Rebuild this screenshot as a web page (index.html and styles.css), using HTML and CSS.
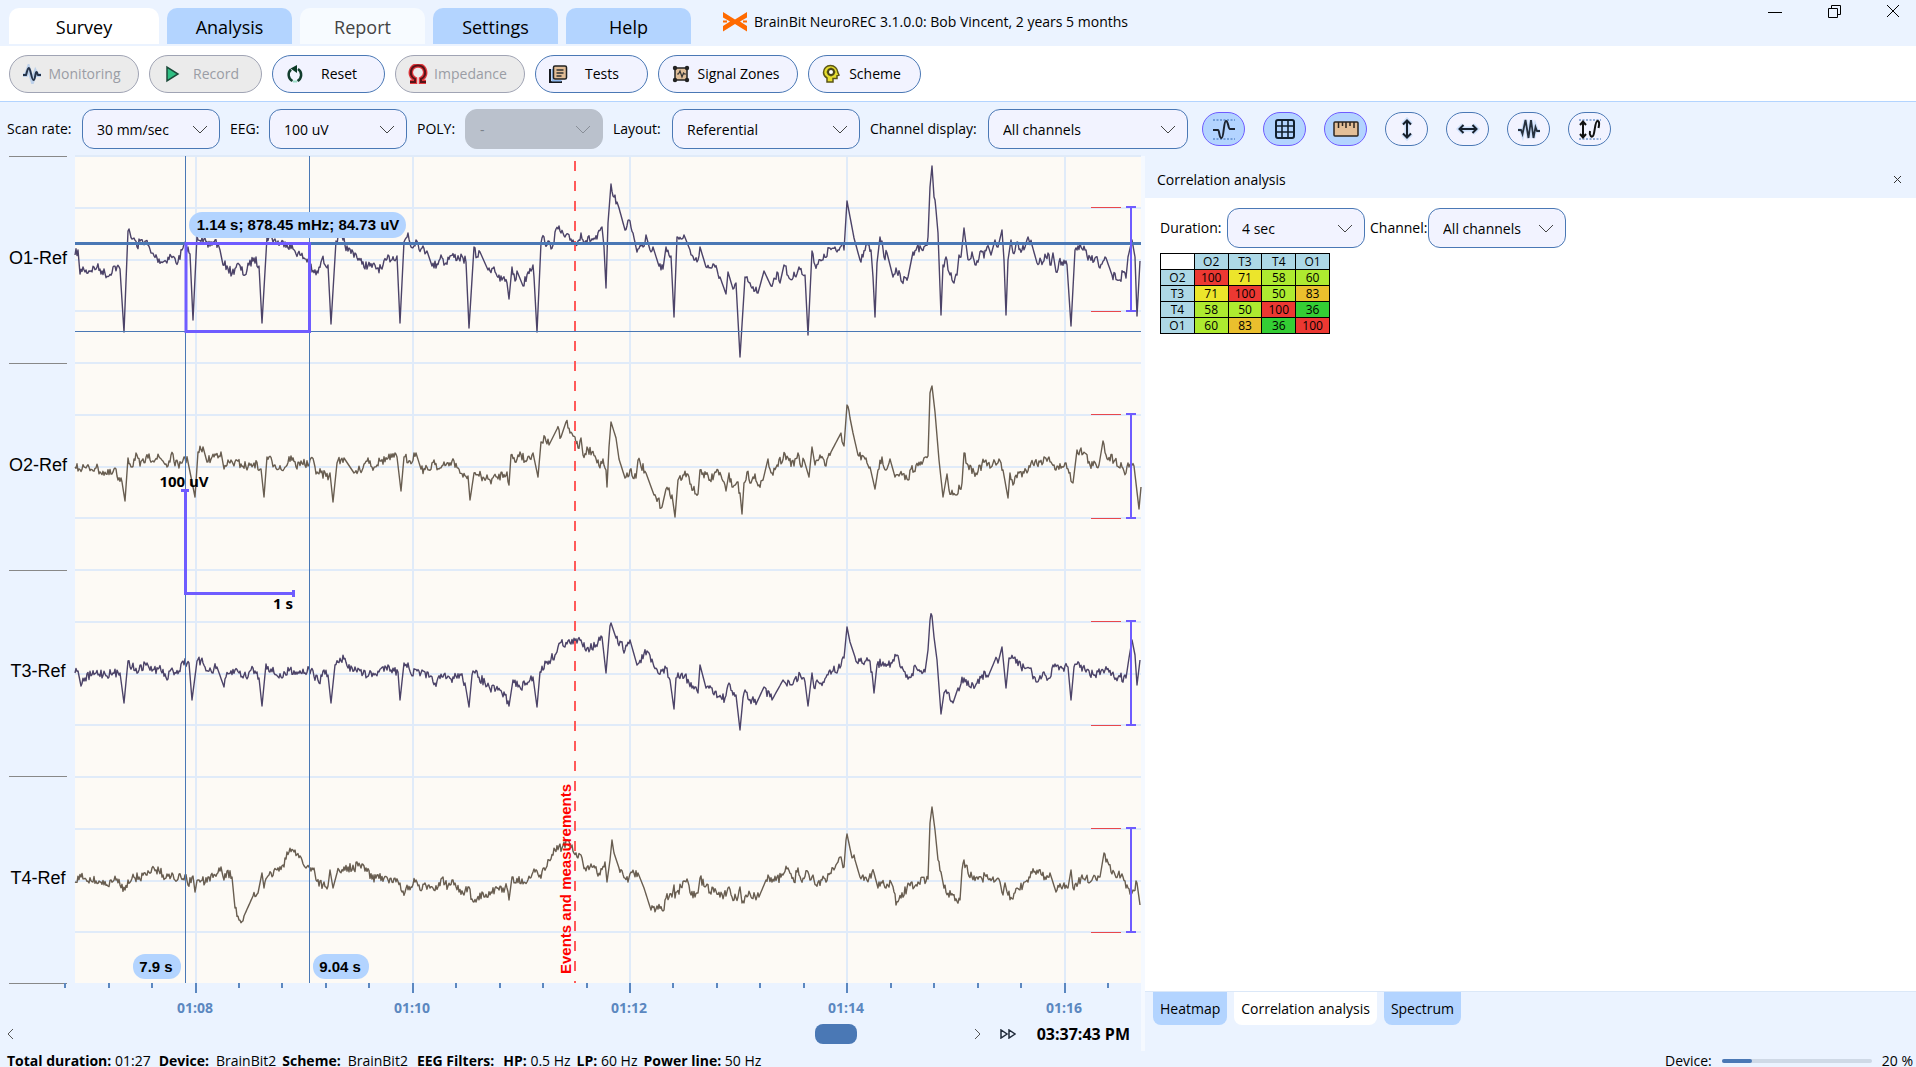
FILE: index.html
```html
<!DOCTYPE html>
<html lang="en">
<head>
<meta charset="utf-8">
<title>BrainBit NeuroREC</title>
<link rel="stylesheet" href="styles.css">
</head>
<body>
<header class="titlebar">
  <nav class="tabs">
    <button class="tab tab-wide active">Survey</button>
    <button class="tab">Analysis</button>
    <button class="tab pale">Report</button>
    <button class="tab">Settings</button>
    <button class="tab">Help</button>
  </nav>
  <div class="app-title">
    <svg width="24" height="20" viewBox="0 0 24 20" fill="#ff6a00"><path d="M0 0 12 7.500 24 0V5.500L17 9.500 24 14V19.500L12 12 0 19.500V14L7 9.500 0 5.500Z"/><path d="M0 8.500h4v2H0zM20 8.500h4v2h-4z"/></svg>
    <span>BrainBit NeuroREC 3.1.0.0: Bob Vincent, 2 years 5 months</span>
  </div>
  <div class="window-controls">
    <button aria-label="Minimize"><svg width="16" height="16"><path d="M1 9.500h14" class="wc"/></svg></button>
    <button aria-label="Restore"><svg width="16" height="16"><path d="M2.500 5.500h9v9h-9zM5.500 5V2.500h9v9h-3" class="wc"/></svg></button>
    <button aria-label="Close"><svg width="16" height="16"><path d="M2 2 14 14M14 2 2 14" class="wc"/></svg></button>
  </div>
</header>

<div class="toolbar">
  <button class="tool w-l" disabled><svg width="20" height="20" viewBox="0 0 20 20"><path d="M1 11h3l2.500-7 4 13 3-9 1.500 3h4" fill="none" stroke="#8fb8ea" stroke-width="4" opacity=".5"/><path d="M1 11h3C5 8 5.500 4 7 4s2.500 12 4.500 12S13 8 14.500 8s.5 3 1.500 3h3" fill="none" stroke="#26344a" stroke-width="2"/></svg><span>Monitoring</span></button>
  <button class="tool" disabled><svg width="20" height="20" viewBox="0 0 20 20"><path d="M5 3v14l11-7z" fill="#2fbf83" stroke="#1c4a3a" stroke-width="1.500"/></svg><span>Record</span></button>
  <button class="tool"><svg width="20" height="20" viewBox="0 0 20 20"><path d="M6 5.500A7 7 0 0 0 7.500 17M13 5a7 7 0 0 1-.5 12" fill="none" stroke="#123d2d" stroke-width="2.500"/><path d="M12 1v8L5.500 4.500z" fill="#0c3a26"/><path d="M8.500 17.500h3" stroke="#43c98f" stroke-width="2" stroke-dasharray="1 1"/></svg><span>Reset</span></button>
  <button class="tool w-l" disabled><svg width="20" height="20" viewBox="0 0 20 20"><path d="M2 18h5v-3C3 13 2.500 9.500 3 7c.8-3.500 3.500-5.500 7-5.500S16.200 3.500 17 7c.5 2.500 0 6-4 8v3h5" fill="none" stroke="#e0373c" stroke-width="4.500"/><path d="M2 18h5v-3C3 13 2.500 9.500 3 7c.8-3.500 3.500-5.500 7-5.500S16.200 3.500 17 7c.5 2.500 0 6-4 8v3h5" fill="none" stroke="#571317" stroke-width="2"/></svg><span>Impedance</span></button>
  <button class="tool"><svg width="20" height="20" viewBox="0 0 20 20"><path d="M2 5v13h12" fill="none" stroke="#17191d" stroke-width="2"/><path d="M3.500 5h2v11h8v1.500h-10z" fill="#8fb9ee"/><rect x="5.500" y="2" width="13" height="13" rx="1.500" fill="#e2bd96" stroke="#222" stroke-width="1.500"/><path d="M8.500 6h7M8.500 9h7M8.500 12h5" stroke="#333" stroke-width="1.300"/></svg><span>Tests</span></button>
  <button class="tool w-xl"><svg width="20" height="20" viewBox="0 0 20 20"><rect x="4" y="4" width="12" height="12" fill="#dfbd98" stroke="#222" stroke-width="1.500"/><g fill="#222"><circle cx="4" cy="4" r="2.200"/><circle cx="16" cy="4" r="2.200"/><circle cx="4" cy="16" r="2.200"/><circle cx="16" cy="16" r="2.200"/></g><path d="M6 10h1.500L9 7l2 6 1.500-4 1 1H15" fill="none" stroke="#333" stroke-width="1.200"/></svg><span>Signal Zones</span></button>
  <button class="tool"><svg width="20" height="20" viewBox="0 0 20 20"><path d="M6 18v-4C3.500 12.500 2.500 10.500 2.500 8.500c0-4 3-7 7-7s7 3 7.200 6.500l1.300 3-2 .8V14.500h-4V18z" fill="#e6dd2e" stroke="#5b5618" stroke-width="1.500"/><circle cx="10" cy="8" r="3" fill="#fff" stroke="#4c4818" stroke-width="2"/><path d="M10 3.500v9M5.500 8h9" stroke="#4c4818" stroke-width="1" stroke-dasharray="1.500 6"/></svg><span>Scheme</span></button>
</div>

<div class="filters">
  <label for="rate" class="f-label l-rate">Scan rate:</label>
  <span class="drop d-m"><select id="rate"><option>30 mm/sec</option></select><svg class="chev" width="16" height="10"><path d="M1 1 8 8 15 1"/></svg></span>
  <label for="eeg" class="f-label l-eeg">EEG:</label>
  <span class="drop d-m"><select id="eeg"><option>100 uV</option></select><svg class="chev" width="16" height="10"><path d="M1 1 8 8 15 1"/></svg></span>
  <label for="poly" class="f-label l-poly">POLY:</label>
  <span class="drop d-m"><select id="poly" disabled><option>-</option></select><svg class="chev" width="16" height="10"><path d="M1 1 8 8 15 1"/></svg></span>
  <label for="layout" class="f-label l-layout">Layout:</label>
  <span class="drop d-l"><select id="layout"><option>Referential</option></select><svg class="chev" width="16" height="10"><path d="M1 1 8 8 15 1"/></svg></span>
  <label for="display" class="f-label l-display">Channel display:</label>
  <span class="drop d-xl"><select id="display"><option>All channels</option></select><svg class="chev" width="16" height="10"><path d="M1 1 8 8 15 1"/></svg></span>
  <div class="modes">
    <button class="mode on" aria-label="Filter range"><svg width="24" height="24" viewBox="0 0 24 24"><path d="M1 3h22M1 22h22" stroke="#3569b4" stroke-dasharray="2 1.500"/><path d="M1 13h5c1.500 0 1 8 3.500 8s2-17 4.500-17 2 8 4 8h5" fill="none" stroke="#1c2430" stroke-width="2"/></svg></button>
    <button class="mode on" aria-label="Grid"><svg width="24" height="24" viewBox="0 0 24 24"><rect x="3" y="3" width="18" height="18" rx="2" fill="none" stroke="#12202f" stroke-width="2"/><path d="M9 3v18M15 3v18M3 9h18M3 15h18" stroke="#12202f" stroke-width="1.600"/></svg></button>
    <button class="mode on" aria-label="Ruler"><svg width="26" height="24" viewBox="0 0 26 24"><rect x="1" y="5" width="24" height="14" rx="1" fill="#e3bf98" stroke="#2c2620" stroke-width="1.500"/><path d="M5.500 5v6M9.500 5v4M13 5v6M17 5v4M21 5v6" stroke="#2c2620" stroke-width="1.500"/></svg></button>
    <button class="mode" aria-label="Vertical scale"><svg width="24" height="24" viewBox="0 0 24 24"><path d="M12 4v16M8 7.500 12 3.500l4 4M8 16.500l4 4 4-4" fill="none" stroke="#a9cdf8" stroke-width="5" opacity=".5"/><path d="M12 4v16M8 7.500 12 3.500l4 4M8 16.500l4 4 4-4" fill="none" stroke="#16202d" stroke-width="2"/></svg></button>
    <button class="mode" aria-label="Horizontal scale"><svg width="24" height="24" viewBox="0 0 24 24"><path d="M4 12h16M7.500 8 3.500 12l4 4M16.500 8l4 4-4 4" fill="none" stroke="#a9cdf8" stroke-width="5" opacity=".5"/><path d="M4 12h16M7.500 8 3.500 12l4 4M16.500 8l4 4-4 4" fill="none" stroke="#16202d" stroke-width="2"/></svg></button>
    <button class="mode" aria-label="Signal"><svg width="24" height="24" viewBox="0 0 24 24"><path d="M1 13h3l1.500 4L8.500 3l3 18 2.500-18 2.500 18 2-11 1.500 4H23" fill="none" stroke="#a9cdf8" stroke-width="4" opacity=".5"/><path d="M1 13h3l1.500 4L8.500 3l3 18 2.500-18 2.500 18 2-11 1.500 4H23" fill="none" stroke="#26303d" stroke-width="1.800"/></svg></button>
    <button class="mode" aria-label="Auto scale"><svg width="24" height="24" viewBox="0 0 24 24"><path d="M1 3h22M1 22h22" stroke="#3569b4" stroke-dasharray="2 1.500"/><path d="M5 4.500v16M2 8l3-3.500L8 8M2 17l3 3.500L8 17M12 14c-1 4 2 8 3.500 4S17 4 19.500 4 21 9 20.500 11" fill="none" stroke="#111" stroke-width="2"/></svg></button>
  </div>
</div>

<main class="workspace">
  <section class="signals">
    <div class="plot-row">
      <ul class="channels">
        <li>O1-Ref</li><li>O2-Ref</li><li>T3-Ref</li><li>T4-Ref</li>
      </ul>
      <svg class="plot" viewBox="75 156 1066 864">
        <rect x="75" y="156" width="1066" height="827" fill="#fdfaf5"/>
        <g id="grid"></g>
        <g id="traces"></g>
        <path d="M575 161V983" stroke="#ff5a5a" stroke-width="2" stroke-dasharray="10 10"/>
        <path d="M185.500 156V983M309.500 156V983M75 331.500H1141" class="cursor"/>
        <path d="M75 243.500H1141" class="cursor thick"/>
        <rect x="186" y="243.500" width="123.500" height="88" class="measure"/>
        <g id="scales"></g>
        <path d="M181 490h8M185 490V593.500H293M293 590v7" class="ruler heavy"/>
        <text x="184" y="487" class="ruler-text" text-anchor="middle">100 uV</text>
        <text x="293" y="609" class="ruler-text" text-anchor="end">1 s</text>
        <rect x="189" y="212" width="217" height="26" rx="13" class="pill"/>
        <text x="298" y="230" class="pill-text" text-anchor="middle">1.14 s; 878.45 mHz; 84.73 uV</text>
        <rect x="133" y="954" width="48" height="25" rx="12" class="pill"/>
        <text x="156" y="972" class="pill-text" text-anchor="middle">7.9 s</text>
        <rect x="313" y="954" width="56" height="25" rx="12" class="pill"/>
        <text x="340" y="972" class="pill-text" text-anchor="middle">9.04 s</text>
        <text class="event" transform="translate(571 974) rotate(-90)">Events and measurements</text>
        <g id="axis"></g>
      </svg>
    </div>
    <div class="scroll-row">
      <button class="step" aria-label="Back"><svg width="8" height="12"><path d="M6 1 1 6l5 5"/></svg></button>
      <input class="timeline" type="range" min="0" max="1000" value="881" aria-label="Position">
      <button class="step" aria-label="Forward"><svg width="8" height="12"><path d="M2 1 7 6l-5 5"/></svg></button>
      <button class="step fast" aria-label="Play"><svg width="16" height="10"><path d="M1 1v8l6-4zM9 1v8l6-4z"/></svg></button>
      <time class="clock">03:37:43 PM</time>
    </div>
  </section>

  <aside class="panel">
    <div class="panel-head"><h2>Correlation analysis</h2><button aria-label="Close panel"><svg width="9" height="9"><path d="M1 1 8 8M8 1 1 8"/></svg></button></div>
    <div class="panel-body">
      <div class="panel-filters">
        <label for="duration" class="l-duration">Duration:</label>
        <span class="drop d-m"><select id="duration"><option>4 sec</option></select><svg class="chev" width="16" height="10"><path d="M1 1 8 8 15 1"/></svg></span>
        <label for="channel" class="l-channel">Channel:</label>
        <span class="drop d-m"><select id="channel"><option>All channels</option></select><svg class="chev" width="16" height="10"><path d="M1 1 8 8 15 1"/></svg></span>
      </div>
      <table class="matrix">
        <tr><td></td><th>O2</th><th>T3</th><th>T4</th><th>O1</th></tr>
        <tr><th>O2</th><td class="red">100</td><td class="yellow">71</td><td class="lime">58</td><td class="lime">60</td></tr>
        <tr><th>T3</th><td class="yellow">71</td><td class="red">100</td><td class="lime">50</td><td class="amber">83</td></tr>
        <tr><th>T4</th><td class="lime">58</td><td class="lime">50</td><td class="red">100</td><td class="green">36</td></tr>
        <tr><th>O1</th><td class="lime">60</td><td class="amber">83</td><td class="green">36</td><td class="red">100</td></tr>
      </table>
    </div>
    <div class="panel-tabs">
      <button>Heatmap</button><button class="current">Correlation analysis</button><button>Spectrum</button>
    </div>
  </aside>
</main>

<footer class="status">
  <span class="s-dur"><b>Total duration:</b> 01:27</span>
  <span><b>Device:</b>&ensp;BrainBit2</span>
  <span><b>Scheme:</b>&ensp;BrainBit2</span>
  <span class="s-filters"><b>EEG Filters:</b></span>
  <span><b>HP:</b> 0.5 Hz</span>
  <span><b>LP:</b> 60 Hz</span>
  <span><b>Power line:</b> 50 Hz</span>
  <label class="battery" for="battery">Device:</label>
  <progress id="battery" max="100" value="20"></progress>
  <span>20 %</span>
</footer>
<script src="chart.js"></script>
</body>
</html>
```
FILE: styles.css
```css
* { box-sizing: border-box; }
body {
  margin: 0; height: 100vh; overflow: hidden;
  display: flex; flex-direction: column;
  background: #ebf3ff; color: #000;
  font: 14px/20px "Open Sans", "Noto Sans", sans-serif;
}
button, select { font: inherit; color: inherit; }
button { border: 0; background: none; padding: 0; }

.titlebar { display: flex; height: 46px; flex: none; }
.tabs { display: flex; align-items: flex-end; gap: 8px; padding: 0 0 2px 9px; }
.tab { width: 125px; height: 36px; border-radius: 10px 10px 0 0; background: #b3d4ff; font-size: 18px; line-height: 24px; padding-top: 2px; }
.tab-wide { width: 150px; }
.tab.active { background: #fff; }
.tab.pale { background: #f7fbff; color: #444; }
.app-title { display: flex; align-items: center; gap: 7px; padding: 0 0 2px 32px; }
.window-controls { margin-left: auto; display: flex; gap: 43px; padding: 3px 15px 0 0; align-items: flex-start; }
.window-controls button { height: 16px; line-height: 0; }
.wc { fill: none; stroke: #000; }

.toolbar { flex: none; height: 56px; background: #fff; border-bottom: 1px solid #b3d4ff; display: flex; align-items: center; gap: 10px; padding: 0 9px; }
.tool { display: flex; align-items: center; width: 113px; height: 38px; padding: 0 11px 0 12px; border: 1px solid #4a78b5; border-radius: 19px; background: #f2f3ff; }
.tool svg { flex: none; }
.tool span { flex: 1; text-align: center; white-space: nowrap; }
.tool.w-l { width: 130px; }
.tool.w-xl { width: 140px; }
.tool:disabled { background: #ebebeb; border-color: #a0a4b4; color: #9a9da5; }

.filters { flex: none; height: 54px; display: flex; align-items: center; padding: 0 7px; }
.f-label { flex: none; white-space: nowrap; }
.l-rate { width: 75px; }
.l-eeg { width: 49px; padding-left: 10px; }
.l-poly { width: 58px; padding-left: 10px; }
.l-layout { width: 69px; padding-left: 10px; }
.l-display { width: 128px; padding-left: 10px; }
.drop { position: relative; flex: none; height: 40px; }
.drop select { appearance: none; width: 100%; height: 40px; border: 1px solid #4a78b5; border-radius: 12px; background: #f2f3ff; padding: 2px 30px 0 14px; }
.drop select:disabled { background: #bac1cc; border-color: #bac1cc; color: #7c828b; opacity: 1; }
.chev { position: absolute; right: 12px; top: 16px; fill: none; stroke: #444; pointer-events: none; }
select:disabled + .chev { stroke: #888e97; }
.d-m { width: 138px; }
.d-l { width: 188px; }
.d-xl { width: 200px; }
.modes { display: flex; gap: 18px; padding-left: 14px; }
.mode { display: flex; align-items: center; justify-content: center; width: 43px; height: 34px; border: 1px solid #4a78b5; border-radius: 17px; background: #f2f3ff; }
.mode.on { background: #b3d4ff; border-color: #6f5cff; }

.workspace { flex: 1; min-height: 0; display: grid; grid-template-columns: minmax(0, 1145fr) minmax(0, 771fr); }
.signals { display: flex; flex-direction: column; border-right: 4px solid #f5f9ff; }
.plot-row { display: grid; grid-template-columns: 75px minmax(0, 1fr); }
.plot { display: block; width: 100%; overflow: visible; }
.channels { list-style: none; margin: 0 8px 36px 9px; padding: 0; display: grid; grid-template-rows: repeat(4, 1fr); border-bottom: 1px solid #888; font: 18px/22px "Liberation Sans", Arial, sans-serif; }
.channels li { border-top: 1px solid #888; display: flex; align-items: center; justify-content: center; padding-bottom: 4px; white-space: nowrap; }
.cursor { fill: none; stroke: #4a78b5; shape-rendering: crispEdges; }
.cursor.thick { stroke-width: 3; }
.measure { fill: none; stroke: #6f5cff; stroke-width: 3; }
.ruler { fill: none; stroke: #6f5cff; stroke-width: 2; shape-rendering: crispEdges; }
.ruler.heavy { stroke-width: 3; }
.ruler-text { font-weight: 700; font-size: 15px; }
.pill { fill: #b3d4ff; }
.pill-text { font: 700 15px "Liberation Sans", Arial, sans-serif; }
.event { font: 700 15px "Liberation Sans", Arial, sans-serif; fill: #f00; }
.grid-line { stroke: #e0ebf9; stroke-width: 2; shape-rendering: crispEdges; }
.trace { fill: none; stroke-width: 1.4; stroke-linejoin: round; }
.limit { stroke: #e8474c; shape-rendering: crispEdges; }
.tick { stroke: #5b87c0; stroke-width: 2; }
.tick-text { fill: #5b87c0; font-weight: 700; font-size: 14px; text-anchor: middle; }

.scroll-row { display: flex; align-items: center; height: 28px; padding: 0 11px 0 7px; }
.step { width: 8px; height: 20px; display: flex; align-items: center; }
.step path { fill: none; stroke: #555; }
.step.fast { width: 16px; margin: 0 21px 0 19px; }
.step.fast path { stroke: #222c3c; stroke-width: 1.5; }
.timeline { appearance: none; flex: 1; height: 20px; margin: 0 9px; background: transparent; }
.timeline::-webkit-slider-thumb { appearance: none; width: 42px; height: 20px; border-radius: 8px; background: #4a78b5; }
.clock { font-size: 16px; font-weight: 700; white-space: nowrap; }

.panel { display: flex; flex-direction: column; min-width: 0; }
.panel-head { height: 42px; display: flex; align-items: center; justify-content: space-between; padding: 5px 14px 0 12px; }
.panel-head h2 { margin: 0; font: inherit; }
.panel-head button { display: flex; }
.panel-head path { stroke: #333; fill: none; }
.panel-body { flex: 1; background: #fff; padding: 10px 15px; border-bottom: 1px solid #dbe8f8; }
.panel-filters { display: flex; align-items: center; margin-bottom: 5px; }
.l-duration { width: 67px; }
.l-channel { width: 63px; padding-left: 5px; }
.matrix { border-collapse: collapse; font-size: 12px; line-height: 15px; table-layout: fixed; width: 170px; }
.matrix th, .matrix td { height: 16px; padding: 0; border: 1px solid #000; text-align: center; font-weight: 400; }
.matrix th { background: #add8e6; }
.red { background: #ec3832; }
.yellow { background: #ece52b; }
.lime { background: #aeea30; }
.amber { background: #eabf2d; }
.green { background: #34ce34; }
.panel-tabs { display: flex; gap: 7px; padding: 0 8px 26px; }
.panel-tabs button { height: 33px; padding: 0 7px; border-radius: 0 0 8px 8px; background: #b3d4ff; }
.panel-tabs .current { background: #fff; }

.status { flex: none; height: 16px; display: flex; align-items: flex-start; padding: 0 3px 0 7px; white-space: nowrap; gap: 6px; }
.s-dur { margin-right: 2px; }
.s-filters { margin: 0 3px; }
.battery { margin-left: auto; }
progress { appearance: none; width: 150px; height: 4px; margin: 8px 4px 0; border: 0; }
progress::-webkit-progress-bar { background: #cfd9e6; border-radius: 2px; }
progress::-webkit-progress-value { background: #4a78b5; border-radius: 2px; }
```
FILE: chart.js
```js
// Samples of each channel as "x,y" knots on the plot canvas.
const channels = [
  { color: '#4c4368', knots: '75,255 78,250 80,274 83,267 85,272 97,267 102,271 109,276 113,267 120,269 124,332 128,231 132,239 134,238 137,247 140,241 146,241 151,253 157,258 163,262 171,256 178,262 183,248 186,245 190,254 193,320 197,236 202,238 208,247 215,240 220,250 223,265 227,266 232,274 237,264 245,275 249,265 254,258 259,266 262,323 267,237 272,238 280,244 285,242 293,249 300,255 309,261 312,272 318,273 322,259 328,265 331,324 336,241 343,240 348,251 355,253 362,264 370,266 382,269 387,259 397,256 400,323 404,242 408,233 411,247 416,240 421,249 427,251 432,266 437,264 441,255 445,264 450,256 463,258 466,262 469,328 474,247 477,257 480,252 488,270 494,267 500,281 503,278 507,283 509,299 512,267 515,281 517,271 523,286 528,272 533,265 534,277 537,332 541,243 544,237 547,245 553,245 555,232 558,229 565,237 573,240 577,245 581,233 583,240 597,239 602,227 604,247 606,288 608,223 611,184 614,197 619,208 625,230 630,221 633,233 637,252 641,246 643,247 646,235 650,250 653,247 658,263 663,269 666,247 671,256 674,317 677,237 684,235 690,250 694,260 698,260 700,247 706,267 715,267 720,277 726,294 728,272 733,289 736,283 740,357 745,277 750,283 758,293 764,271 771,286 778,273 780,283 784,265 789,278 793,278 799,267 803,275 805,275 808,335 812,251 815,265 823,260 830,248 837,252 843,243 844,250 847,201 851,222 854,238 860,260 863,257 866,245 871,250 873,277 875,317 877,263 880,237 882,241 884,257 887,253 893,277 896,268 902,282 908,277 913,252 917,247 922,250 926,245 928,237 930,187 932,166 934,197 936,210 938,233 941,315 943,265 946,257 948,270 953,282 957,275 959,255 961,257 964,228 967,252 969,260 972,252 976,265 982,252 984,258 987,247 991,255 995,240 998,247 1002,230 1004,260 1006,315 1008,260 1011,240 1013,253 1017,242 1022,250 1028,237 1032,245 1037,263 1043,262 1048,253 1050,265 1053,253 1056,272 1059,262 1067,265 1071,326 1075,250 1078,246 1085,250 1088,260 1096,257 1100,268 1106,258 1112,275 1120,280 1123,272 1126,278 1128,257 1132,240 1135,257 1137,316 1140,261' },
  { color: '#685d50', knots: '75,467 86,468 96,468 106,474 112,474 115,468 118,480 122,482 125,501 128,458 132,467 136,453 140,466 148,458 160,458 168,466 171,455 179,468 184,457 188,462 195,497 198,452 203,447 207,462 212,457 221,452 224,469 229,462 241,464 248,467 254,463 261,469 264,497 267,457 275,465 284,469 291,456 296,467 301,461 308,466 311,458 317,472 329,476 330,473 333,502 337,463 344,458 354,473 360,470 368,458 372,467 380,461 394,457 397,457 401,491 404,457 410,461 416,453 421,469 429,470 434,460 439,469 446,465 452,461 458,468 463,477 468,476 470,500 474,473 484,478 490,480 497,477 507,472 509,485 511,455 515,462 520,452 525,461 533,453 538,477 541,442 545,437 549,445 557,429 561,437 566,422 570,433 575,437 578,448 581,438 583,455 588,449 595,456 599,466 603,459 606,470 607,487 609,447 611,422 616,438 619,459 625,478 630,470 636,478 638,460 646,473 654,495 662,507 666,489 672,495 675,517 678,480 684,475 689,477 693,490 698,494 700,470 710,480 718,470 722,479 726,491 729,473 732,487 737,482 740,493 742,514 744,483 747,472 751,483 755,474 759,485 763,480 768,459 772,473 777,465 785,454 794,466 798,453 801,467 804,460 809,477 812,447 815,465 820,455 826,466 831,452 841,433 844,446 847,405 850,418 853,433 858,455 865,459 870,467 875,489 878,470 882,457 886,470 890,459 895,477 902,475 908,480 911,469 920,465 928,456 930,393 932,386 935,412 939,460 943,497 947,474 949,490 956,495 962,483 964,453 968,465 976,473 985,461 990,468 999,459 1003,470 1008,498 1010,473 1013,485 1018,472 1024,473 1031,463 1040,462 1049,457 1056,470 1065,463 1069,473 1073,483 1077,450 1085,453 1090,465 1099,465 1103,441 1106,455 1115,460 1122,467 1126,473 1128,463 1134,466 1139,509 1141,487' },
  { color: '#4c4368', knots: '75,673 78,671 81,686 85,678 96,673 111,674 120,673 124,703 128,661 132,667 139,670 147,663 152,671 159,668 168,679 170,671 179,671 182,662 189,663 192,700 197,661 203,663 209,671 217,667 224,687 226,677 235,670 246,677 253,668 259,678 262,706 266,664 274,673 283,677 290,669 296,672 311,670 319,683 323,671 328,675 331,703 335,665 344,659 348,668 355,667 363,674 374,675 388,665 394,671 398,672 400,700 404,663 408,663 411,674 417,671 429,677 435,683 442,677 451,679 460,674 465,683 469,707 472,675 475,673 485,683 490,689 498,690 505,695 509,706 513,680 518,687 525,685 533,677 537,707 540,672 546,663 555,655 560,643 570,643 581,640 587,648 596,645 602,637 606,673 609,637 611,623 616,638 625,650 630,640 637,665 647,651 651,662 658,673 666,668 670,680 674,709 676,678 685,675 692,688 698,693 700,665 706,688 712,688 719,697 725,698 728,685 733,695 736,695 740,730 743,698 746,692 749,700 757,702 764,687 772,700 783,680 792,685 800,674 805,682 808,706 812,673 814,688 817,680 823,682 830,670 840,668 844,658 847,627 850,642 855,657 862,663 869,660 872,672 874,693 877,665 883,662 892,663 897,655 901,668 909,677 916,667 925,672 928,650 930,620 932,616 934,637 937,660 941,714 944,693 949,693 953,703 958,688 964,678 970,687 977,683 982,675 988,677 995,660 998,663 1002,647 1006,688 1009,658 1014,658 1021,667 1029,668 1037,682 1045,675 1050,678 1053,665 1060,667 1068,667 1071,700 1074,667 1079,663 1086,672 1095,675 1105,670 1114,677 1126,678 1129,658 1132,640 1135,655 1137,685 1140,660' },
  { color: '#685d50', knots: '75,882 81,877 100,882 107,885 117,879 125,890 128,880 139,877 146,875 152,868 159,871 166,878 172,873 178,879 185,875 188,885 193,876 195,892 198,880 207,882 215,875 221,867 224,880 227,871 232,877 235,908 239,920 244,916 253,896 258,893 262,873 264,888 269,875 277,870 283,865 289,852 295,850 302,860 305,867 314,868 316,880 326,887 328,886 330,870 333,888 337,873 348,867 354,870 357,862 361,868 366,868 372,879 377,875 388,880 400,883 402,892 411,887 416,880 420,890 429,885 438,887 441,879 448,886 455,883 459,892 464,895 468,887 472,899 477,899 483,893 492,893 498,888 507,888 509,900 512,877 516,883 522,879 527,882 535,872 539,877 546,868 549,860 555,850 562,848 567,840 572,845 577,857 581,855 585,868 592,867 600,875 605,862 607,882 610,860 612,840 614,853 619,868 628,882 631,872 638,873 644,888 651,910 657,906 663,911 666,898 672,897 674,885 675,898 681,887 688,882 691,895 698,893 700,878 705,887 714,892 724,895 729,887 732,897 738,897 740,887 742,903 746,895 759,897 766,880 768,875 772,882 781,877 788,868 794,882 798,868 801,880 808,872 810,880 813,875 816,885 822,880 826,882 833,868 838,862 841,857 844,867 846,840 847,834 851,853 855,860 860,877 869,878 874,873 878,888 881,882 886,888 891,882 894,892 896,905 901,898 907,888 918,882 928,879 930,823 932,807 935,830 938,860 941,872 944,888 951,895 960,900 962,870 964,860 968,873 977,877 982,879 985,875 994,882 1000,882 1003,895 1005,883 1008,895 1013,899 1017,888 1023,885 1032,873 1039,870 1045,877 1050,873 1056,892 1064,883 1068,888 1071,870 1073,888 1081,878 1092,880 1100,877 1104,853 1106,862 1114,872 1123,877 1128,888 1132,893 1137,883 1140,905' }
];

const rowHeight = 207;
const put = (id, markup) => { document.getElementById(id).innerHTML = markup; };

let grid = '';
for (let y = 156; y < 983; y += rowHeight / 4) grid += `<path class="grid-line" d="M75 ${Math.round(y)}H1141"/>`;
let axis = '';
for (let i = -3; i <= 21; i++) {
  const x = Math.floor(196 + i * 43.45);
  if (i < 0 || i % 5) {
    if (x < 1141) axis += `<path class="tick" d="M${x} 983v5"/>`;
  } else {
    grid += `<path class="grid-line" d="M${x} 156V983"/>`;
    axis += `<path class="tick" d="M${x} 983v10"/>`;
    const label = '01:' + String(8 + (i / 5) * 2).padStart(2, '0');
    axis += `<text class="tick-text" x="${x - 1}" y="1013">${label}</text>`;
  }
}
put('grid', grid);
put('axis', axis);

// Fine sensor ripple between knots, from a fixed sequence so that redraws agree.
let seed = 7;
const ripple = () => { seed = (seed * 16807) % 2147483647; return seed / 2147483647 - 0.5; };

put('traces', channels.map(({ color, knots }) => {
  const points = knots.split(' ').map(k => k.split(',').map(Number));
  const out = [points[0].join()];
  for (let i = 1; i < points.length; i++) {
    const [x0, y0] = points[i - 1];
    const [x1, y1] = points[i];
    const steps = Math.max(1, Math.round(x1 - x0));
    const amp = Math.abs(y1 - y0) > 14 ? 0 : 9;
    for (let s = 1; s < steps; s++) {
      const t = s / steps;
      out.push((x0 + (x1 - x0) * t).toFixed(1) + ',' + (y0 + (y1 - y0) * t + ripple() * amp).toFixed(1));
    }
    out.push(points[i].join());
  }
  return `<polyline class="trace" stroke="${color}" points="${out.join(' ')}"/>`;
}).join(''));

put('scales', channels.map((c, i) => {
  const top = 207 + i * rowHeight;
  return `<path class="limit" d="M1091 ${top + 0.5}h30M1091 ${top + 104.5}h30"/><path class="ruler" d="M1126 ${top}h10M1131 ${top}v104M1126 ${top + 104}h10"/>`;
}).join(''));
```
